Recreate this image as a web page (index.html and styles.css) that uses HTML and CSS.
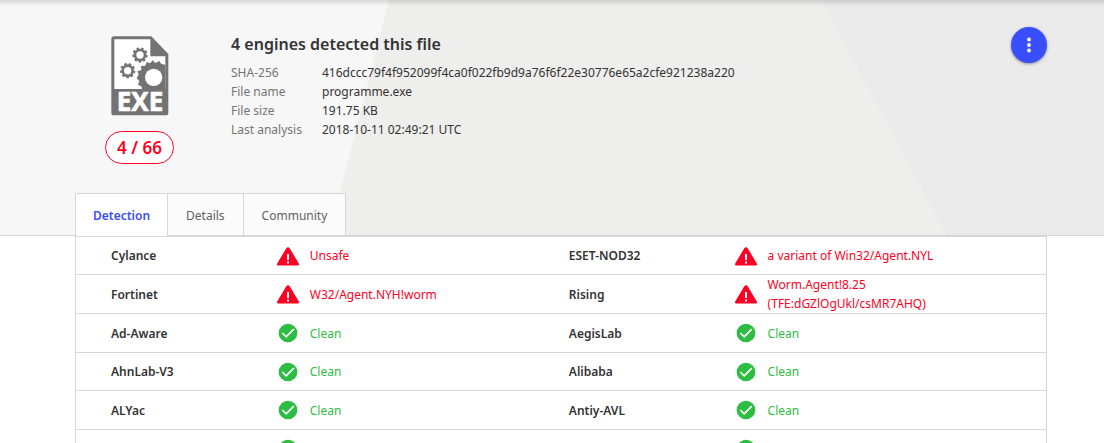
FILE: index.html
```html
<!DOCTYPE html>
<html lang="en">
<head>
<meta charset="utf-8">
<title>File report</title>
<link rel="stylesheet" href="styles.css">
</head>
<body>
<svg class="sprite" aria-hidden="true">
  <symbol id="warn" viewBox="1 1 22 22"><path fill="#ff0024" d="M2.500 21.500h19c1.300 0 1.900-1 1.300-2L13.700 4.200c-.8-1.400-2.600-1.400-3.400 0L1.200 19.500c-.6 1 0 2 1.300 2z"/><path fill="#fff" d="M11 10h2v6h-2zM11 17.500h2v2h-2z"/></symbol>
  <symbol id="ok" viewBox="0 0 24 24"><circle cx="12" cy="12" r="10.200" fill="#2ebd43"/><path fill="none" stroke="#fff" stroke-width="1.800" d="M5.800 12l4.200 4.200 8.300-8.400"/></symbol>
</svg>
<header class="hero">
  <svg class="backdrop" viewBox="0 0 1104 235" preserveAspectRatio="none" aria-hidden="true"><path fill="#eeeeec" d="M389 0H821L946 235H329z"/><path fill="#eaeaea" d="M821 0H1104V235H946z"/></svg>
  <div class="wrap">
    <div class="summary">
      <div class="badge">
        <svg class="exe" viewBox="62 47 174 240" role="img" aria-label="EXE file">
          <path fill="#737373" d="M71 48H183L234 101V277Q234 285 226 285H71Q63 285 63 277V56Q63 48 71 48z"/>
          <path fill="#fff" d="M72 57H180V108H225V206H72z"/>
          <g fill="none" stroke="#737373">
            <circle cx="149" cy="104" r="15" stroke-width="8"/><circle cx="149" cy="104" r="20" stroke-width="6" pathLength="18" stroke-dasharray="1.100 .9"/>
            <circle cx="112" cy="151" r="15" stroke-width="8"/><circle cx="112" cy="151" r="20" stroke-width="6" pathLength="18" stroke-dasharray="1.100 .9"/>
          </g>
          <path fill="#737373" d="M155 206L153 198 143 194 147 181 139 174 145 162 141 153 153 149 152 137 165 136 169 125 179 129 187 120 195 128 207 122 213 131 225 133V206z"/>
          <circle cx="190" cy="171" r="26" fill="#fff"/>
          <text x="149" y="272" text-anchor="middle" class="exe-label">EXE</text>
        </svg>
        <span class="score">4 / 66</span>
      </div>
      <div class="info">
        <h1>4 engines detected this file</h1>
        <dl>
          <dt>SHA-256</dt><dd>416dccc79f4f952099f4ca0f022fb9d9a76f6f22e30776e65a2cfe921238a220</dd>
          <dt>File name</dt><dd>programme.exe</dd>
          <dt>File size</dt><dd>191.75 KB</dd>
          <dt>Last analysis</dt><dd>2018-10-11 02:49:21 UTC</dd>
        </dl>
      </div>
      <button class="more" type="button" aria-label="More actions"><svg viewBox="0 0 24 24" fill="#fff"><circle cx="12" cy="6.500" r="1.900"/><circle cx="12" cy="12" r="1.900"/><circle cx="12" cy="17.500" r="1.900"/></svg></button>
    </div>
    <nav class="tabs">
      <a href="#detection" class="active">Detection</a><a href="#details">Details</a><a href="#community">Community</a>
    </nav>
  </div>
</header>
<main class="wrap" id="detection">
  <table>
    <colgroup><col class="c-name"><col class="c-first"><col class="c-name"><col></colgroup>
    <tbody>
    <tr><th scope="row">Cylance</th><td class="bad"><div><svg><use href="#warn"/></svg><span>Unsafe</span></div></td><th scope="row">ESET-NOD32</th><td class="bad"><div><svg><use href="#warn"/></svg><span>a variant of Win32/Agent.NYL</span></div></td></tr>
    <tr><th scope="row">Fortinet</th><td class="bad"><div><svg><use href="#warn"/></svg><span>W32/Agent.NYH!worm</span></div></td><th scope="row">Rising</th><td class="bad"><div><svg><use href="#warn"/></svg><span>Worm.Agent!8.25 (TFE:dGZlOgUkl/csMR7AHQ)</span></div></td></tr>
    <tr><th scope="row">Ad-Aware</th><td><div><svg><use href="#ok"/></svg><span>Clean</span></div></td><th scope="row">AegisLab</th><td><div><svg><use href="#ok"/></svg><span>Clean</span></div></td></tr>
    <tr><th scope="row">AhnLab-V3</th><td><div><svg><use href="#ok"/></svg><span>Clean</span></div></td><th scope="row">Alibaba</th><td><div><svg><use href="#ok"/></svg><span>Clean</span></div></td></tr>
    <tr><th scope="row">ALYac</th><td><div><svg><use href="#ok"/></svg><span>Clean</span></div></td><th scope="row">Antiy-AVL</th><td><div><svg><use href="#ok"/></svg><span>Clean</span></div></td></tr>
    <tr><th scope="row"></th><td><div><svg><use href="#ok"/></svg></div></td><th scope="row"></th><td><div><svg><use href="#ok"/></svg></div></td></tr>
    </tbody>
  </table>
</main>
</body>
</html>
```
FILE: styles.css
```css
* { box-sizing: border-box; }
html { height: 100%; overflow: hidden; }
body { margin: 0; height: 100%; overflow: hidden; background: #fff; color: #333; font: 12px/19px "Noto Sans", "Open Sans", sans-serif; }
.sprite { position: absolute; width: 0; height: 0; }
.hero { position: relative; background: #f7f7f7; border-bottom: 1px solid #d6d6d6; }
.backdrop { position: absolute; inset: 0; width: 100%; height: 100%; }
.hero::after { content: ""; position: absolute; inset: 0 0 auto; height: 6px; background: linear-gradient(rgba(0, 0, 0, .13), transparent); }
.wrap { position: relative; margin: 0 57px 0 75px; }
.summary { display: flex; align-items: flex-start; padding-top: 27px; min-height: 193px; }
.badge { display: flex; flex-direction: column; align-items: center; width: 129px; padding-top: 9px; gap: 15px; }
.exe { width: 58px; height: 80px; }
.exe-label { font: 700 78px "Open Sans", sans-serif; fill: #fff; stroke: #fff; stroke-width: 2; }
.score { width: 69px; border: 1px solid #ff0024; border-radius: 17px; color: #ff0024; background: #fff; font-size: 17px; font-weight: 600; line-height: 31px; text-align: center; }
.info { flex: 1; padding: 6px 0 0 27px; }
h1 { margin: 0 0 7px; font-size: 16px; font-weight: 600; line-height: 23px; }
dl { display: grid; grid-template-columns: 91px 1fr; margin: 0; }
dt { color: #757575; }
dd { margin: 0; }
.more { display: grid; place-items: center; width: 36px; height: 36px; padding: 0; border: 0; border-radius: 50%; background: #394eff; box-shadow: 0 1px 3px rgba(0, 0, 0, .4); }
.more svg { width: 24px; height: 24px; }
.tabs { display: flex; height: 42px; }
.tabs a { padding: 0 18px; border: 1px solid #d6d6d6; border-width: 1px 1px 0 0; background: #fbfbfb; color: #616161; line-height: 43px; text-decoration: none; overflow: hidden; }
.tabs .active { position: relative; z-index: 1; height: 43px; padding: 0 17px; border-left-width: 1px; background: #fff; color: #394eff; font-weight: 600; }
table { width: 100%; table-layout: fixed; border-spacing: 0; border: 1px solid #d6d6d6; }
.c-name { width: 20.7%; }
.c-first { width: 26.5%; }
th, td { height: 39px; padding: 0; border-bottom: 1px solid #d6d6d6; text-align: left; }
tr:nth-child(3n+1) > * { height: 38px; }
th { padding-left: 35px; font-weight: 600; color: #333; }
td { color: #2ebd43; }
td.bad { color: #ff0024; }
td div { display: flex; align-items: center; gap: 11px; height: 37px; padding-right: 72px; }
td svg { flex: none; width: 22px; height: 22px; }
```
